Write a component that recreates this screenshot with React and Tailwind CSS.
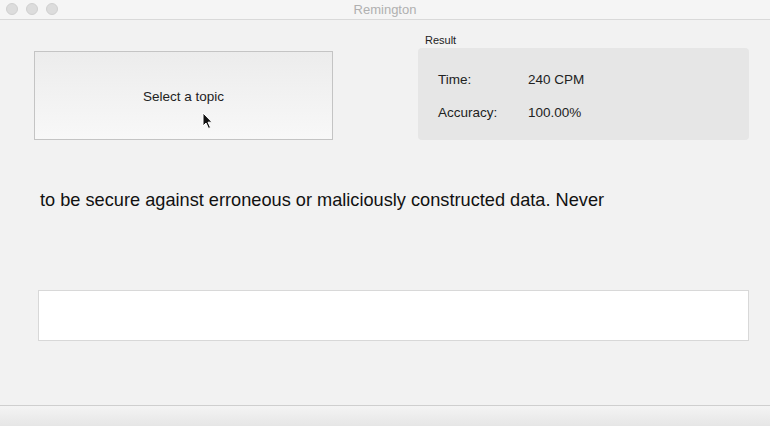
export default function App() {
  return (
    <div className="w-[770px] h-[426px] flex flex-col bg-[#f2f2f2] overflow-hidden" style={{ fontFamily: '"Liberation Sans", Arial, sans-serif' }}>
      {/* Title bar */}
      <div className="relative h-[20px] shrink-0 bg-[#f5f5f5] border-b border-[#d9d9d9] flex items-center justify-center">
        <div className="absolute left-[6px] top-[3px] flex gap-[8px]">
          <span className="w-[12px] h-[12px] rounded-full bg-[#dcdcdc] border border-[#d0d0d0]" />
          <span className="w-[12px] h-[12px] rounded-full bg-[#dcdcdc] border border-[#d0d0d0]" />
          <span className="w-[12px] h-[12px] rounded-full bg-[#dcdcdc] border border-[#d0d0d0]" />
        </div>
        <span className="text-[13px] text-[#b0b0b0]">Remington</span>
      </div>

      {/* Body */}
      <div className="flex-1 flex flex-col px-[34px]">
        <div className="flex justify-between mt-[12px]">
          <button className="relative mt-[19px] w-[299px] h-[89px] pt-[3px] border border-[#c4c4c4] bg-gradient-to-b from-[#ececec] to-[#f8f8f8] text-[13.5px] text-[#222] flex items-center justify-center">
            Select a topic
            <svg className="absolute left-[167px] top-[60px]" width="12" height="18" viewBox="0 0 12 18">
              <path d="M1 1 L1 14 L4 11 L6.5 16.5 L8.5 15.5 L6 10.2 L10 10.2 Z" fill="#111" stroke="#fff" strokeWidth="1" />
            </svg>
          </button>
          <div className="flex flex-col w-[331px] mr-[-13px]">
            <span className="text-[11px] text-[#222] ml-[7px] leading-[14px] mt-[1px]">Result</span>
            <div className="mt-[1px] h-[92px] pt-[4px] rounded-[4px] bg-[#e6e6e6] flex flex-col justify-center gap-[17px] pl-[20px] text-[13.5px] text-[#222] leading-[16px]">
              <div className="flex"><span className="w-[90px]">Time:</span><span>240 CPM</span></div>
              <div className="flex"><span className="w-[90px]">Accuracy:</span><span>100.00%</span></div>
            </div>
          </div>
        </div>

        <p className="mt-[49px] ml-[6px] text-[18.2px] text-[#111] leading-[22px]">
          to be secure against erroneous or maliciously constructed data. Never
        </p>

        <div className="mt-[79px] ml-[4px] mr-[-13px] h-[51px] bg-white border border-[#d8d8d8]" />
      </div>

      {/* Bottom bar */}
      <div className="h-[21px] shrink-0 border-t border-[#cfcfcf] bg-gradient-to-b from-[#f4f4f4] to-[#e6e6e6]" />
    </div>
  );
}
